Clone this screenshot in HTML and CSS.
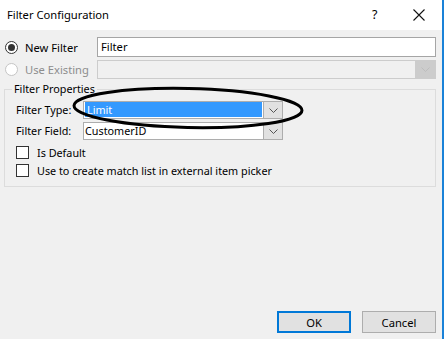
FILE: index.html
```html
<!DOCTYPE html>
<html>
<head>
<meta charset="utf-8">
<link rel="stylesheet" href="styles.css">
</head>
<body>
<div class="window">
  <div class="titlebar">
    <span class="title">Filter Configuration</span>
    <span class="help">?</span>
    <svg class="close" width="12" height="12" viewBox="0 0 12 12"><path d="M0.5 0.5 L11.5 11.5 M11.5 0.5 L0.5 11.5" stroke="#111" stroke-width="1.1" fill="none"/></svg>
  </div>
  <div class="content">
    <div class="grid">
      <label class="radio-row"><span class="radio checked"></span><span>New Filter</span></label>
      <div class="textbox">Filter</div>
      <label class="radio-row disabled"><span class="radio"></span><span>Use Existing</span></label>
      <div class="combo disabled-combo"><div class="combo-value"></div><div class="combo-btn"><svg width="9" height="5" viewBox="0 0 9 5"><path d="M0.5 0.5 L4.5 4.5 L8.5 0.5" stroke="#bdbdbd" fill="none"/></svg></div></div>
    </div>
    <fieldset class="group">
      <legend>Filter Properties</legend>
      <div class="prop-grid">
        <span class="prop-label">Filter Type:</span>
        <div class="combo small"><div class="combo-value"><span class="sel">Limit</span></div><div class="combo-btn"><svg width="9" height="5" viewBox="0 0 9 5"><path d="M0.5 0.5 L4.5 4.5 L8.5 0.5" stroke="#555" fill="none"/></svg></div></div>
        <span class="prop-label">Filter Field:</span>
        <div class="combo small"><div class="combo-value">CustomerID</div><div class="combo-btn"><svg width="9" height="5" viewBox="0 0 9 5"><path d="M0.5 0.5 L4.5 4.5 L8.5 0.5" stroke="#555" fill="none"/></svg></div></div>
      </div>
      <label class="check-row"><span class="checkbox"></span><span>Is Default</span></label>
      <label class="check-row"><span class="checkbox"></span><span>Use to create match list in external item picker</span></label>
    </fieldset>
    <svg class="ellipse" width="240" height="50" viewBox="0 0 240 50"><ellipse cx="118" cy="23" rx="114" ry="19.5" transform="rotate(1.2 118 23)" stroke="#000" stroke-width="3" fill="none"/></svg>
    <div class="buttons">
      <button class="btn default">OK</button>
      <button class="btn">Cancel</button>
    </div>
  </div>
</div>
</body>
</html>
```
FILE: styles.css
```css
html, body {
  margin: 0;
  padding: 0;
}
body {
  font-family: "Noto Sans", "Liberation Sans", sans-serif;
  font-size: 10.8px;
  color: #000;
}
.window {
  width: 444px;
  height: 339px;
  box-sizing: border-box;
  border-right: 2px solid #1a82d8;
  background: #f0f0f0;
  display: flex;
  flex-direction: column;
  position: relative;
}
.titlebar {
  height: 30px;
  background: #fff;
  display: flex;
  align-items: center;
  padding-left: 7px;
  flex: none;
}
.title {
  flex: 1;
  font-size: 11.2px;
  margin-top: -1px;
}
.help {
  width: 12px;
  font-size: 12.5px;
  margin-right: 29px;
  margin-top: -1px;
}
.close {
  margin-right: 17px;
}
.content {
  flex: 1;
  display: flex;
  flex-direction: column;
  padding: 7px 6px 0 4px;
  position: relative;
}
.grid {
  display: grid;
  grid-template-columns: 93px 1fr;
  row-gap: 3px;
  align-items: center;
}
.radio-row {
  display: flex;
  align-items: center;
  gap: 7px;
  padding-left: 1px;
  font-size: 11.2px;
}
.radio-row.disabled {
  color: #8d8d8d;
}
.radio {
  width: 11px;
  height: 11px;
  border: 1px solid #333;
  border-radius: 50%;
  background: #fff;
  position: relative;
  flex: none;
}
.radio.checked::after {
  content: "";
  position: absolute;
  left: 2px;
  top: 2px;
  width: 7px;
  height: 7px;
  border-radius: 50%;
  background: #333;
}
.radio-row.disabled .radio {
  border-color: #c5c5c5;
}
.textbox {
  height: 18px;
  border: 1px solid #a5a5a5;
  background: #fff;
  line-height: 18px;
  padding-left: 3px;
  font-size: 11.2px;
}
.combo {
  display: flex;
  height: 18px;
  border: 1px solid #adadad;
  background: #fff;
}
.combo-value {
  flex: 1;
  line-height: 18px;
  padding-left: 3px;
  position: relative;
}
.combo-btn {
  width: 19px;
  background: #e1e1e1;
  display: flex;
  align-items: center;
  justify-content: center;
  border-left: 1px solid #adadad;
  box-sizing: border-box;
}
.disabled-combo {
  background: #f0f0f0;
  border-color: #cccccc;
  height: 17px;
}
.disabled-combo .combo-btn {
  background: #cccccc;
  border-left-color: #cccccc;
  width: 20px;
}
.group {
  margin: 3px 0 0 0;
  padding: 5px 0 9px 11px;
  border: 1px solid #dcdcdc;
  min-width: 0;
}
.group legend {
  padding: 0 2px;
  margin-left: -4px;
  line-height: 14px;
}
.prop-grid {
  display: grid;
  grid-template-columns: 67px 200px;
  row-gap: 3px;
  align-items: center;
}
.prop-label {
  line-height: 14px;
}
.combo.small {
  height: 16px;
}
.combo.small .combo-value {
  line-height: 16px;
  padding-left: 1px;
}
.sel {
  display: block;
  background: #3399ff;
  color: #fff;
  height: 15px;
  line-height: 15px;
  margin-right: 1px;
  padding-left: 2px;
}
.check-row {
  display: flex;
  align-items: center;
  gap: 8px;
  height: 13px;
  margin-top: 6px;
}
.check-row + .check-row {
  margin-top: 5px;
}
.checkbox {
  width: 11px;
  height: 11px;
  border: 1px solid #333;
  background: #fff;
  flex: none;
}
.ellipse {
  position: absolute;
  left: 70px;
  top: 55px;
}
.buttons {
  margin-top: auto;
  display: flex;
  justify-content: flex-end;
  gap: 11px;
  padding-bottom: 6px;
}
.btn {
  width: 74px;
  height: 22px;
  font-family: inherit;
  font-size: 11.2px;
  background: #e1e1e1;
  border: 1px solid #adadad;
  padding: 0;
  color: #000;
}
.btn.default {
  border: 2px solid #0078d7;
}
```
